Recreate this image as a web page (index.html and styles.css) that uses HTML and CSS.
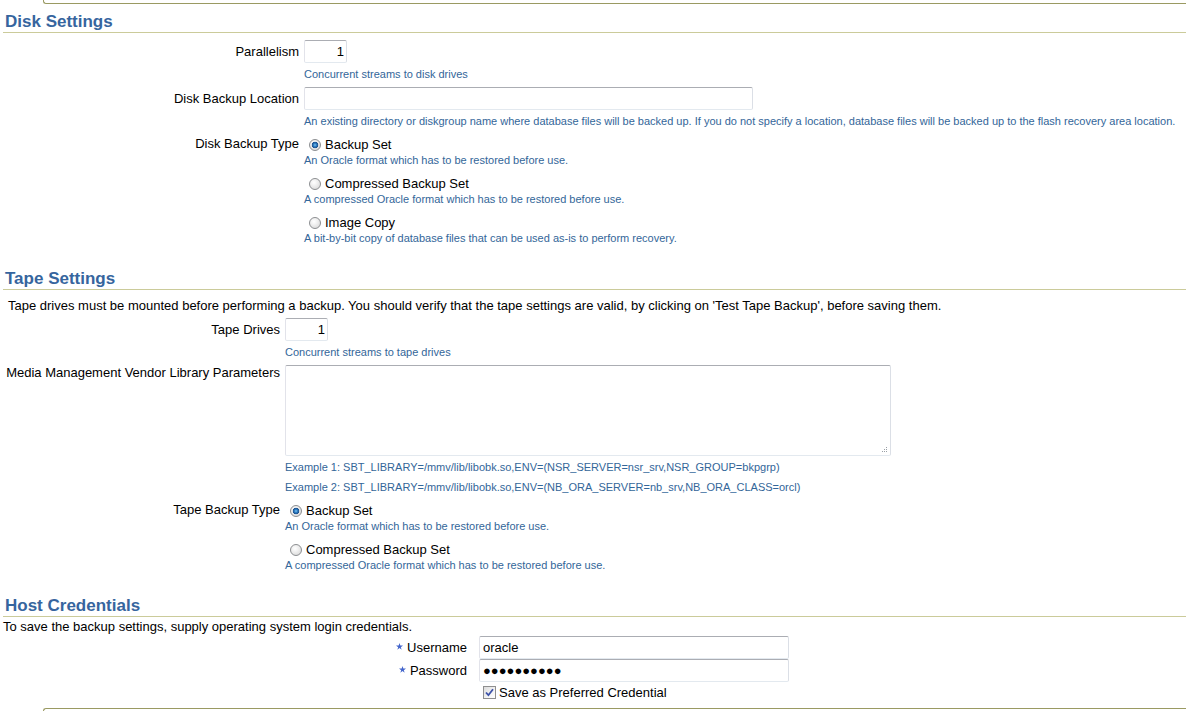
FILE: index.html
```html
<!DOCTYPE html>
<html lang="en">
<head>
<meta charset="utf-8">
<title>Backup Settings</title>
<link rel="stylesheet" href="styles.css">
</head>
<body>
<div class="cap cap-top"></div>

<section class="sec sec-disk">
  <h2 class="sec-title">Disk Settings</h2>
  <div class="form form-disk">
    <div class="lbl">Parallelism</div>
    <div class="fld">
      <input class="inp inp-num" type="text" value="1">
      <div class="hint">Concurrent streams to disk drives</div>
    </div>

    <div class="lbl">Disk Backup Location</div>
    <div class="fld">
      <input class="inp inp-loc" type="text" value="">
      <div class="hint">An existing directory or diskgroup name where database files will be backed up. If you do not specify a location, database files will be backed up to the flash recovery area location.</div>
    </div>

    <div class="lbl lbl-top">Disk Backup Type</div>
    <div class="fld opts">
      <div class="opt">
        <label class="optline"><input class="radio" type="radio" name="dbt" checked>Backup Set</label>
        <div class="hint hint-opt">An Oracle format which has to be restored before use.</div>
      </div>
      <div class="opt">
        <label class="optline"><input class="radio" type="radio" name="dbt">Compressed Backup Set</label>
        <div class="hint hint-opt">A compressed Oracle format which has to be restored before use.</div>
      </div>
      <div class="opt">
        <label class="optline"><input class="radio" type="radio" name="dbt">Image Copy</label>
        <div class="hint hint-opt">A bit-by-bit copy of database files that can be used as-is to perform recovery.</div>
      </div>
    </div>
  </div>
</section>

<section class="sec sec-tape">
  <h2 class="sec-title">Tape Settings</h2>
  <p class="intro intro-tape">Tape drives must be mounted before performing a backup. You should verify that the tape settings are valid, by clicking on 'Test Tape Backup', before saving them.</p>
  <div class="form form-tape">
    <div class="lbl">Tape Drives</div>
    <div class="fld">
      <input class="inp inp-num" type="text" value="1">
      <div class="hint">Concurrent streams to tape drives</div>
    </div>

    <div class="lbl lbl-area">Media Management Vendor Library Parameters</div>
    <div class="fld">
      <div class="area-wrap">
        <textarea class="area"></textarea>
        <svg class="grip" width="7" height="7" viewBox="0 0 7 7" aria-hidden="true">
          <rect x="5" y="1" width="1" height="1"/>
          <rect x="3" y="3" width="1" height="1"/>
          <rect x="5" y="3" width="1" height="1"/>
          <rect x="1" y="5" width="1" height="1"/>
          <rect x="3" y="5" width="1" height="1"/>
          <rect x="5" y="5" width="1" height="1"/>
        </svg>
      </div>
      <div class="hint">Example 1: SBT_LIBRARY=/mmv/lib/libobk.so,ENV=(NSR_SERVER=nsr_srv,NSR_GROUP=bkpgrp)</div>
      <div class="hint hint-ex2">Example 2: SBT_LIBRARY=/mmv/lib/libobk.so,ENV=(NB_ORA_SERVER=nb_srv,NB_ORA_CLASS=orcl)</div>
    </div>

    <div class="lbl lbl-top">Tape Backup Type</div>
    <div class="fld opts">
      <div class="opt">
        <label class="optline"><input class="radio" type="radio" name="tbt" checked>Backup Set</label>
        <div class="hint hint-opt">An Oracle format which has to be restored before use.</div>
      </div>
      <div class="opt">
        <label class="optline"><input class="radio" type="radio" name="tbt">Compressed Backup Set</label>
        <div class="hint hint-opt">A compressed Oracle format which has to be restored before use.</div>
      </div>
    </div>
  </div>
</section>

<section class="sec sec-host">
  <h2 class="sec-title">Host Credentials</h2>
  <p class="intro intro-host">To save the backup settings, supply operating system login credentials.</p>
  <div class="form form-host">
    <div class="lbl"><svg class="req" width="7" height="7" viewBox="0 0 10 10" aria-hidden="true"><polygon points="5,0 6.2,3.6 10,3.6 6.9,5.9 8.1,9.6 5,7.3 1.9,9.6 3.1,5.9 0,3.6 3.8,3.6"/></svg>Username</div>
    <div class="fld"><input class="inp inp-cred" type="text" value="oracle"></div>

    <div class="lbl"><svg class="req" width="7" height="7" viewBox="0 0 10 10" aria-hidden="true"><polygon points="5,0 6.2,3.6 10,3.6 6.9,5.9 8.1,9.6 5,7.3 1.9,9.6 3.1,5.9 0,3.6 3.8,3.6"/></svg>Password</div>
    <div class="fld"><input class="inp inp-cred inp-pw" type="text" value="●●●●●●●●●●" readonly></div>

    <div class="lbl"></div>
    <div class="fld">
      <label class="chkline">
        <span class="chk" role="checkbox" aria-checked="true">
          <svg width="9" height="9" viewBox="0 0 9 9" aria-hidden="true"><path d="M1 4.5 L3.4 7.2 L8 1.2" fill="none" stroke="#3d52a8" stroke-width="1.8"/></svg>
        </span>Save as Preferred Credential
      </label>
    </div>
  </div>
</section>

<div class="cap cap-bottom"></div>
</body>
</html>
```

FILE: styles.css
```css
html, body {
  margin: 0;
  padding: 0;
  background: #ffffff;
}

body {
  font-family: "Liberation Sans", Arial, sans-serif;
  font-size: 13px;
  color: #000000;
  overflow: hidden;
}

.cap {
  margin-left: 43px;
  border-left: 1px solid #9a9a62;
}

.cap-top {
  height: 3px;
  border-bottom: 1px solid #9a9a62;
  border-bottom-left-radius: 3px;
}

.cap-bottom {
  margin-top: 9px;
  height: 3px;
  border-top: 1px solid #9a9a62;
  border-top-left-radius: 3px;
}

.sec-title {
  margin: 0 0 0 3px;
  padding-left: 2px;
  font-size: 17px;
  font-weight: bold;
  line-height: 20px;
  color: #36659e;
  border-bottom: 1px solid #cbcb9a;
}

.sec-disk .sec-title { margin-top: 8px; }
.sec-tape .sec-title { margin-top: 24px; }
.sec-host .sec-title { margin-top: 24px; }

.intro {
  margin: 0;
  line-height: 15px;
}

.intro-tape {
  margin-top: 8px;
  padding-left: 8px;
}

.intro-host {
  margin-top: 2px;
  padding-left: 3px;
}

.form {
  display: grid;
  row-gap: 6px;
}

.form-disk {
  margin-top: 7px;
  grid-template-columns: 299px 1fr;
  column-gap: 5px;
}

.form-tape {
  margin-top: 5px;
  grid-template-columns: 280px 1fr;
  column-gap: 5px;
}

.form-host {
  margin-top: 2px;
  grid-template-columns: 467px 1fr;
  column-gap: 12px;
  row-gap: 0;
}

.lbl {
  text-align: right;
  line-height: 23px;
  white-space: nowrap;
}

.lbl-top {
  line-height: 15px;
  padding-top: 2px;
}

.lbl-area {
  line-height: 15px;
}

.fld {
  min-width: 0;
}

.inp {
  display: block;
  box-sizing: border-box;
  height: 23px;
  margin: 0;
  padding: 0 3px;
  font-family: "Liberation Sans", Arial, sans-serif;
  font-size: 13px;
  color: #000000;
  background: #ffffff;
  border: 1px solid;
  border-color: #abadb3 #dbdfe6 #e3e9ef #e2e3ea;
  border-radius: 2px;
  outline: none;
}

.inp-num {
  width: 43px;
  text-align: right;
  padding-right: 2px;
}

.inp-loc {
  width: 449px;
}

.inp-cred {
  width: 310px;
}

.inp-pw {
  letter-spacing: 0;
}

.hint {
  margin-top: 5px;
  font-size: 11px;
  line-height: 13px;
  color: #336699;
  white-space: nowrap;
}

.hint-ex2 {
  margin-top: 7px;
}

.hint-opt {
  margin-top: 0;
}

.opts {
  padding-top: 2px;
}

.opt + .opt {
  margin-top: 8px;
}

.optline {
  display: flex;
  align-items: center;
  height: 18px;
  line-height: 18px;
}

.radio {
  appearance: none;
  -webkit-appearance: none;
  box-sizing: border-box;
  width: 12px;
  height: 12px;
  margin: 0 4px 0 5px;
  border: 1px solid #8c8e91;
  border-radius: 50%;
  background: radial-gradient(circle at 40% 35%, #ffffff 0, #f1f1f1 35%, #d2d2d2 100%);
  flex: none;
}

.radio:checked {
  background:
    radial-gradient(circle at 50% 50%, #7fc6f2 0, #2f7fc4 1.5px, #1b4f8c 3px, rgba(27, 79, 140, 0) 3.6px),
    radial-gradient(circle at 40% 35%, #ffffff 0, #f1f1f1 35%, #d2d2d2 100%);
}

.area-wrap {
  position: relative;
  width: 606px;
  height: 91px;
}

.area {
  display: block;
  box-sizing: border-box;
  width: 606px;
  height: 91px;
  margin: 0;
  padding: 2px 3px;
  resize: none;
  font-family: "Liberation Sans", Arial, sans-serif;
  font-size: 13px;
  border: 1px solid;
  border-color: #abadb3 #dbdfe6 #e3e9ef #e2e3ea;
  border-radius: 2px;
  background: #ffffff;
  outline: none;
}

.grip {
  position: absolute;
  right: 3px;
  bottom: 3px;
  fill: #9aa0a6;
}

.req {
  fill: #4466cc;
  margin-right: 4px;
  vertical-align: 2px;
}

.chkline {
  display: flex;
  align-items: center;
  margin-top: 4px;
  height: 13px;
  line-height: 13px;
}

.chk {
  box-sizing: border-box;
  width: 13px;
  height: 13px;
  margin: 0 3px 0 4px;
  border: 1px solid #8f8f8f;
  background: linear-gradient(135deg, #dcdcdc 0%, #f4f4f4 60%, #ffffff 100%);
  display: flex;
  align-items: center;
  justify-content: center;
  flex: none;
}
```
